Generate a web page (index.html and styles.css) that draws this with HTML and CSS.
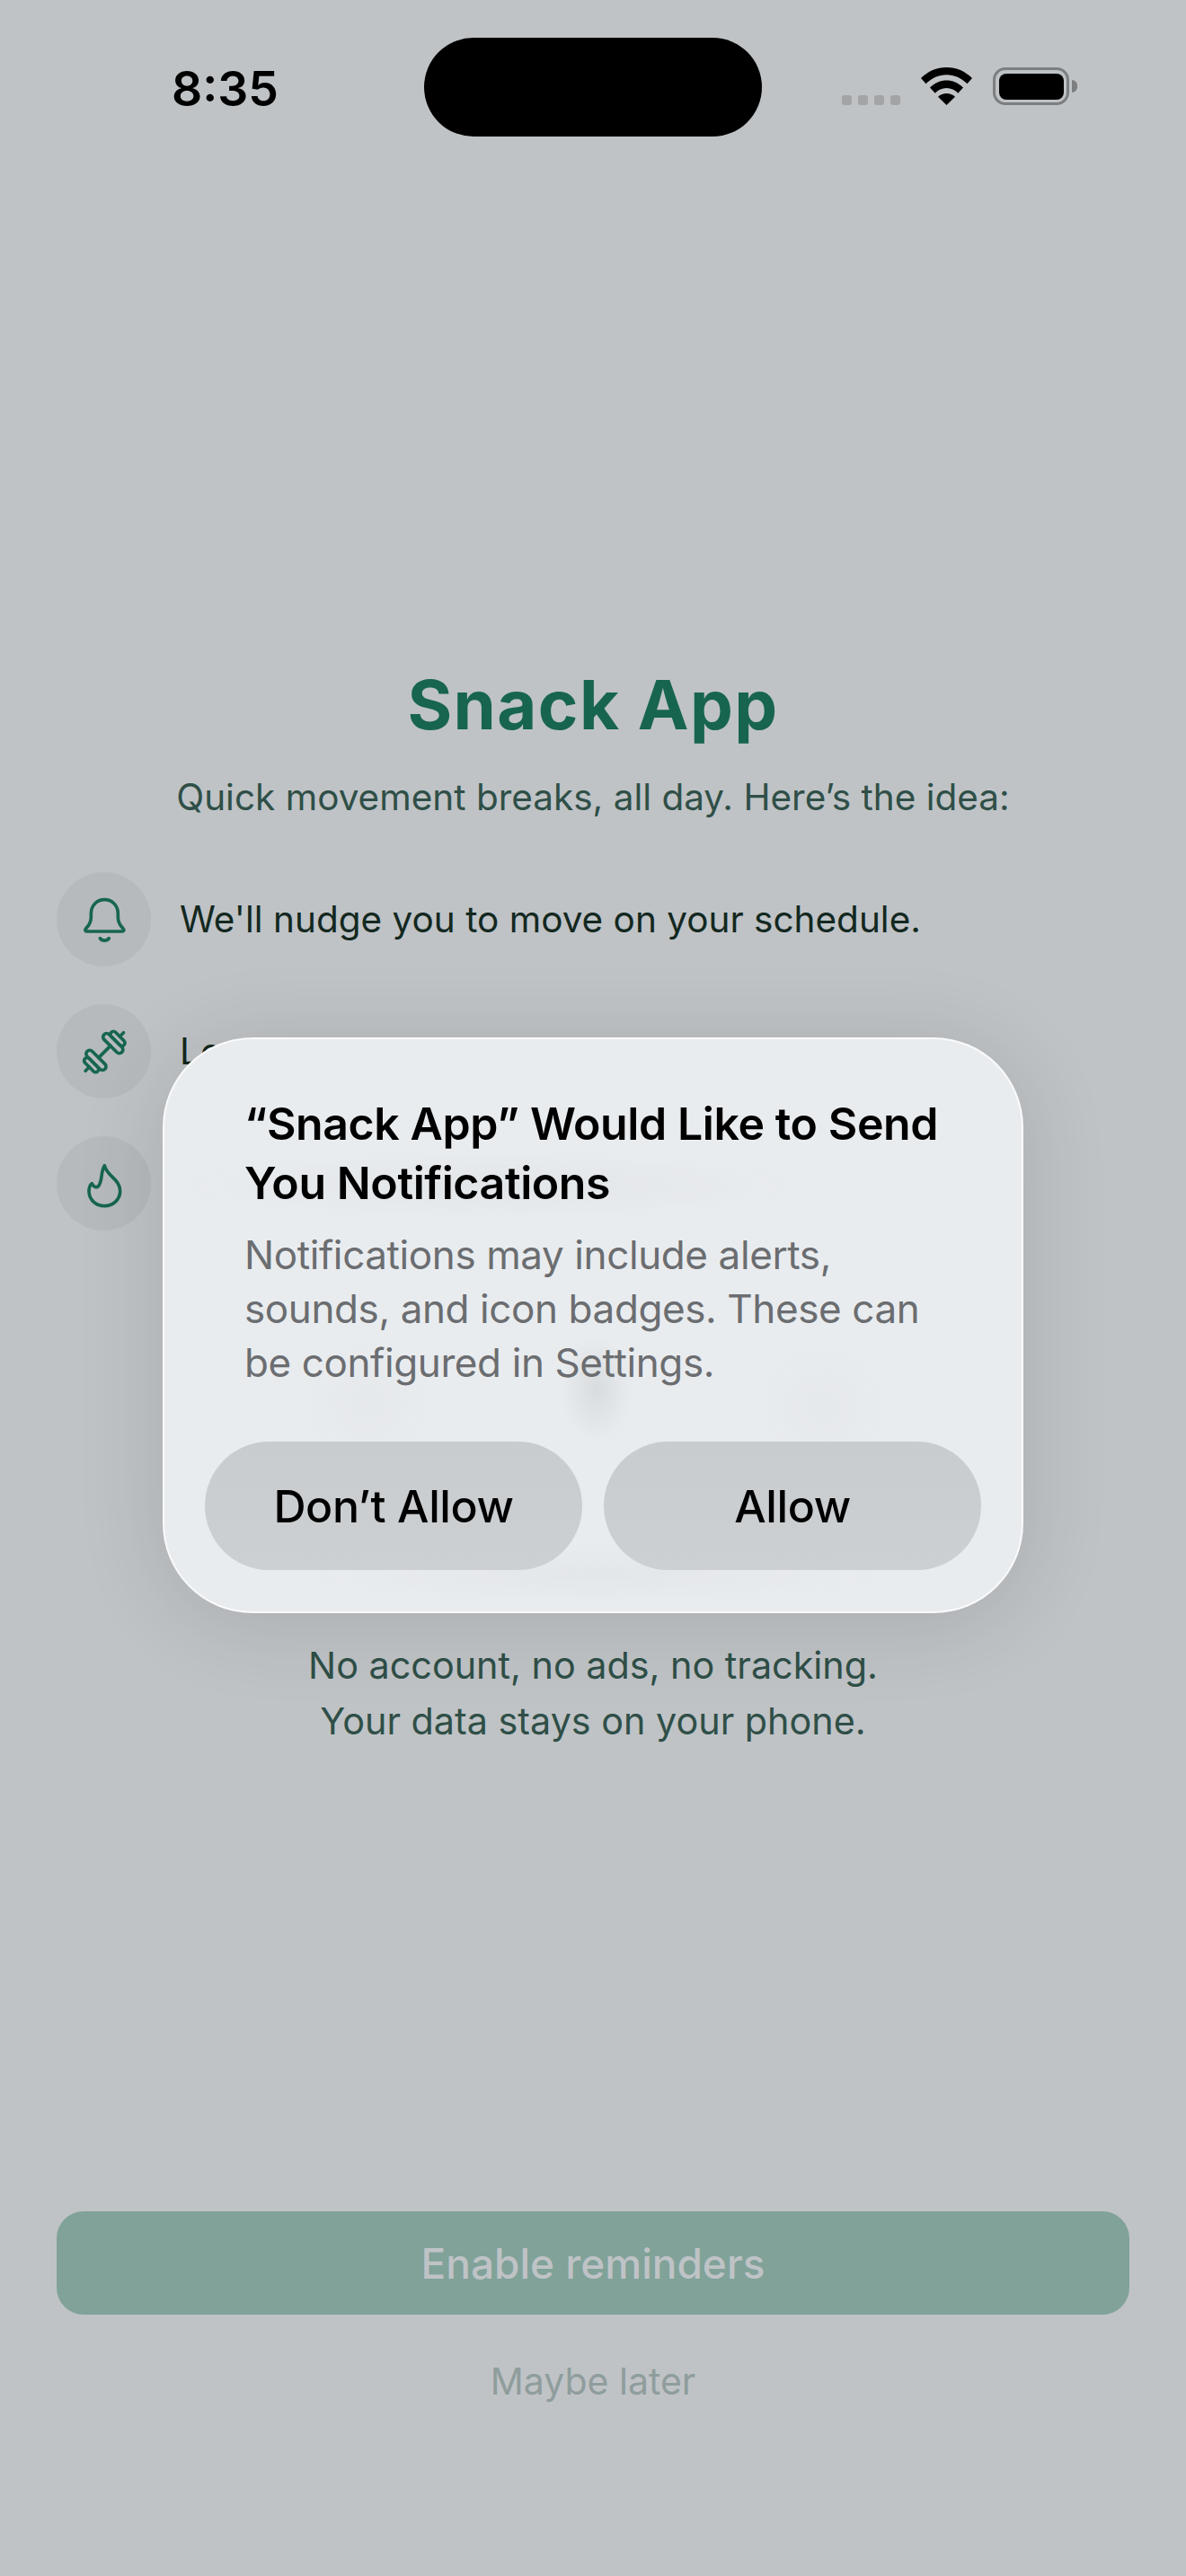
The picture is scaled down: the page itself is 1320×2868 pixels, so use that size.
FILE: index.html
```html
<!DOCTYPE html>
<html lang="en">
<head>
<meta charset="utf-8">
<title>Snack App</title>
<link rel="stylesheet" href="styles.css">
</head>
<body>
<div class="screen">
  <header class="status">
    <span class="time">8:35</span>
    <div class="island"></div>
    <div class="status-icons">
      <div class="dots"><i></i><i></i><i></i><i></i></div>
      <svg class="wifi" viewBox="0 0 57 42"><path d="M28.5 0C17.5 0 7.8 4.3 0 12l5.5 6.2C12.2 11.8 20 8.3 28.5 8.3S44.8 11.8 51.500 18.200L57 12C49.200 4.300 39.500 0 28.500 0Z"/><path d="M28.500 14.500C22 14.500 15.700 17 10 22.500l5.700 6.200C19.200 25.300 23.700 23 28.500 23s9.300 2.300 12.800 5.700L47 22.500C41.300 17 35 14.500 28.500 14.500Z"/><path d="M28.500 29c-3.700 0-6.700 1.200-9.500 3.700L28.500 42l9.500-9.300C35.200 30.200 32.200 29 28.500 29Z"/></svg>
      <div class="battery"><div class="battery-fill"></div></div>
      <div class="battery-nub"></div>
    </div>
  </header>

  <main class="content">
    <h1 class="title">Snack App</h1>
    <p class="subtitle">Quick movement breaks, all day. Here’s the idea:</p>
    <ul class="features">
      <li class="feature">
        <span class="badge"><svg class="icon" viewBox="137 130 180 180"><path d="M228 153C200 153 183 175 183 200V212C183 230 175 240 167 248C161 254 163 259 172 259H284C293 259 295 254 289 248C281 240 273 230 273 212V200C273 175 256 153 228 153Z"/><path d="M213 282C220 292 236 292 243 282"/></svg></span>
        <span class="feature-text">We'll nudge you to move on your schedule.</span>
      </li>
      <li class="feature">
        <span class="badge"><svg class="icon" viewBox="137 571 180 180"><g transform="translate(228 661) rotate(-45)"><path d="M-28 0H28"/><rect x="28" y="-42" width="24" height="84" rx="12"/><rect x="52" y="-30" width="20" height="60" rx="10"/><path d="M72 0H90"/><rect x="-52" y="-42" width="24" height="84" rx="12"/><rect x="-72" y="-30" width="20" height="60" rx="10"/><path d="M-72 0H-90"/></g></svg></span>
        <span class="feature-text">Le</span>
      </li>
      <li class="feature">
        <span class="badge"><svg class="icon" viewBox="137 1011 180 180"><path d="M228 1040C235 1075 280 1085 280 1125C280 1155 255 1175 228 1175C200 1175 176 1155 176 1125C176 1115 180 1105 186 1100C192 1115 205 1115 210 1105C222 1085 215 1060 228 1040Z"/></svg></span>
      </li>
    </ul>
    <p class="privacy">No account, no ads, no tracking.<br>Your data stays on your phone.</p>
  </main>

  <footer class="actions">
    <div class="primary">Enable reminders</div>
    <div class="later">Maybe later</div>
  </footer>

  <section class="alert">
    <h2 class="alert-title">“Snack App” Would Like to Send You Notifications</h2>
    <p class="alert-body">Notifications may include alerts, sounds, and icon badges. These can be configured in Settings.</p>
    <div class="alert-buttons">
      <div class="alert-button">Don’t Allow</div>
      <div class="alert-button">Allow</div>
    </div>
  </section>
</div>
</body>
</html>
```

FILE: styles.css
```css
* { box-sizing: border-box; }
html, body { margin: 0; padding: 0; }
body { background: #bfc3c6; font-family: "Inter", "Liberation Sans", sans-serif; }
.screen {
  position: relative;
  width: 1320px;
  height: 2868px;
  overflow: hidden;
  display: flex;
  flex-direction: column;
  background: #bfc3c6;
}

/* status bar */
.status {
  margin-top: 42px;
  display: flex;
  align-items: center;
  flex: none;
  height: 110px;
}
.time {
  margin-left: 191px;
  width: 281px;
  font-family: "Inter", sans-serif;
  font-size: 53.5px;
  font-weight: 600;
  color: #000;
  line-height: 60px;
  padding-top: 4px;
}
.island { width: 376px; height: 110px; border-radius: 55px; background: #000; flex: none; }
.status-icons { margin-left: 89px; margin-bottom: 2px; display: flex; align-items: flex-end; height: 42px; }
.dots { display: flex; gap: 7px; margin-right: 23px; }
.dots i { display: block; width: 11px; height: 11px; border-radius: 3px; background: #a2a4a6; }
.wifi { display: block; width: 57px; height: 42px; fill: #000; margin-right: 23px; }
.battery {
  width: 85px; height: 42px; border: 3.5px solid #7c7e80; border-radius: 14px; padding: 3.5px;
}
.battery-fill { width: 100%; height: 100%; background: #000; border-radius: 8px; }
.battery-nub { width: 6px; height: 14px; margin: 0 0 14px 3px; background: #7c7e80; border-radius: 0 7px 7px 0; }

/* content */
.content { flex: none; padding: 0 63px; margin-top: 587px; text-align: center; }
.title {
  margin: 0;
  font-size: 76px;
  line-height: 90px;
  font-weight: 700;
  color: #17654f;
  letter-spacing: 1.4px;
}
.subtitle {
  margin: 29px 0 0;
  font-size: 40.500px;
  line-height: 60px;
  font-weight: 400;
  color: #2f4f47;
}
.features { list-style: none; margin: 53px 0 0; padding: 0; display: flex; flex-direction: column; gap: 42px; text-align: left; }
.feature { display: flex; align-items: center; gap: 32px; height: 105px; }
.badge {
  width: 105px; height: 105px; border-radius: 50%; flex: none;
  background: #b6babd; display: flex; align-items: center; justify-content: center;
}
.icon { width: 60px; height: 60px; fill: none; stroke: #17664f; stroke-width: 11; stroke-linecap: round; stroke-linejoin: round; }
.feature-text { font-size: 40.500px; line-height: 60px; color: #13281f; }
.privacy { margin: 453px 0 0; font-size: 41.300px; line-height: 62px; color: #2f4f47; }

/* actions */
.actions { margin-top: auto; padding: 0 63px 187px; display: flex; flex-direction: column; align-items: stretch; gap: 44px; text-align: center; }
.primary {
  height: 115px; border-radius: 30px; background: #80a299; color: #bfc3c6;
  display: flex; align-items: center; justify-content: center;
  font-size: 46px; font-weight: 500;
}
.later { font-size: 41px; line-height: 60px; color: #8f9d9c; }

/* alert: frosted glass, with the blurred page showing through as soft patches */
.alert {
  position: absolute;
  left: 181px;
  top: 1155px;
  width: 958px;
  height: 641px;
  padding: 61px 45px 46px;
  border-radius: 100px;
  background-color: #e9ecef;
  background-image:
    radial-gradient(ellipse 40px 60px at 481px 390px, rgba(190, 194, 196, 0.38), rgba(190, 194, 196, 0) 100%),
    radial-gradient(ellipse 70px 70px at 732px 410px, rgba(200, 204, 206, 0.12), rgba(200, 204, 206, 0) 100%),
    radial-gradient(ellipse 70px 70px at 226px 405px, rgba(200, 204, 206, 0.12), rgba(200, 204, 206, 0) 100%),
    radial-gradient(ellipse 350px 40px at 360px 163px, rgba(205, 209, 210, 0.24), rgba(205, 209, 210, 0) 100%),
    radial-gradient(ellipse 330px 34px at 480px 596px, rgba(205, 209, 210, 0.2), rgba(205, 209, 210, 0) 100%);
  border: 2px solid rgba(255, 255, 255, 0.75);
  box-shadow: 0 10px 100px rgba(0, 0, 0, 0.12);
}
.alert-title { margin: 0 0 0 44px; width: 800px; font-size: 50px; line-height: 66px; font-weight: 600; color: #000; letter-spacing: -0.4px; }
.alert-body { margin: 17px 0 0 44px; width: 800px; font-size: 44px; line-height: 60px; font-weight: 400; color: #6b6d70; letter-spacing: -0.4px; }
.alert-buttons { display: flex; gap: 24px; margin-top: 58px; }
.alert-button {
  flex: 1; height: 143px; border-radius: 72px; background: linear-gradient(#c9cccf, #cdd0d2); color: #000;
  display: flex; align-items: center; justify-content: center;
  font-size: 50px; font-weight: 500; letter-spacing: -0.4px;
}
```
